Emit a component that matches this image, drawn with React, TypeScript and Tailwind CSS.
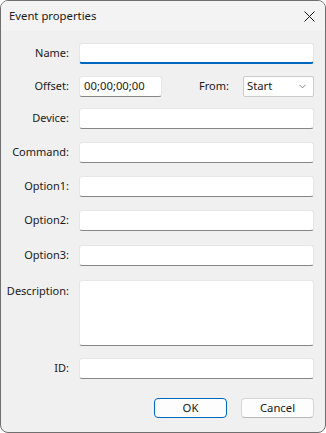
import { ChevronDown } from 'lucide-react';

const font = { fontFamily: '"Noto Sans", "Segoe UI", sans-serif' };

function Field({ label, accent = false }: { label: string; accent?: boolean }) {
  return (
    <div className="flex items-center h-[21px]">
      <div className="w-[69px] pr-[1px] text-right text-[11px] text-[#1a1a1a]">{label}</div>
      <div
        className={
          'ml-[9px] flex-1 h-[21px] bg-white border border-[#e6e6e6] rounded-[3px] ' +
          (accent ? 'border-b-2 border-b-[#0067c0]' : 'border-b-[#868686]')
        }
      />
    </div>
  );
}

export default function App() {
  return (
    <div className="w-[326px] h-[433px] bg-white" style={font}>
      <div className="w-full h-full rounded-[8px] border border-[#6f6f6f] bg-[#f0f0f0] overflow-hidden flex flex-col">
        <div className="h-[30px] bg-[#f3f3f3] flex items-center justify-between pl-[8px] pr-[10px]">
          <span className="text-[11.3px] text-[#1a1a1a]">Event properties</span>
          <svg width="11" height="11" viewBox="0 0 11 11">
            <path d="M0.5 0.5L10.5 10.5M10.5 0.5L0.5 10.5" stroke="#1a1a1a" strokeWidth="1" />
          </svg>
        </div>
        <div className="flex flex-col pr-[11px] pt-[12px]">
          <Field label="Name:" accent />
          <div className="flex items-center h-[21px] mt-[12px]">
            <div className="w-[69px] pr-[1px] text-right text-[11px] text-[#1a1a1a]">Offset:</div>
            <div className="ml-[9px] w-[83px] h-[21px] bg-white border border-[#e6e6e6] border-b-[#868686] rounded-[3px] flex items-center pl-[4px] text-[11.3px] text-[#1a1a1a]">
              00;00;00;00
            </div>
            <div className="ml-[37px] text-[11px] text-[#1a1a1a]">From:</div>
            <div className="ml-auto w-[71px] h-[21px] bg-white border border-[#cccccc] rounded-[2px] flex items-center justify-between pl-[3px] pr-[5px] text-[11.3px] text-[#1a1a1a]">
              <span>Start</span>
              <ChevronDown className="w-[11px] h-[11px] text-[#555]" strokeWidth={1.5} />
            </div>
          </div>
          <div className="flex flex-col gap-[13px] mt-[11px]">
            <Field label="Device:" />
            <Field label="Command:" />
            <Field label="Option1:" />
            <Field label="Option2:" />
            <div className="mt-[1px]">
              <Field label="Option3:" />
            </div>
          </div>
          <div className="flex items-start mt-[14px]">
            <div className="w-[69px] pr-[1px] pt-[3px] text-right text-[11px] text-[#1a1a1a]">Description:</div>
            <div className="ml-[9px] flex-1 h-[66px] bg-white border border-[#e6e6e6] border-b-[#868686] rounded-[3px]" />
          </div>
          <div className="mt-[12px]">
            <Field label="ID:" />
          </div>
          <div className="flex justify-end gap-[14px] mt-[19px]">
            <button className="w-[73px] h-[20px] rounded-[4px] bg-[#fdfdfd] border border-[#0067c0] text-[11.3px] text-[#1a1a1a] flex items-center justify-center">
              OK
            </button>
            <button className="w-[73px] h-[20px] rounded-[4px] bg-[#fdfdfd] border border-[#d5d5d5] border-b-[#b8b8b8] text-[11.3px] text-[#1a1a1a] flex items-center justify-center">
              Cancel
            </button>
          </div>
        </div>
      </div>
    </div>
  );
}
